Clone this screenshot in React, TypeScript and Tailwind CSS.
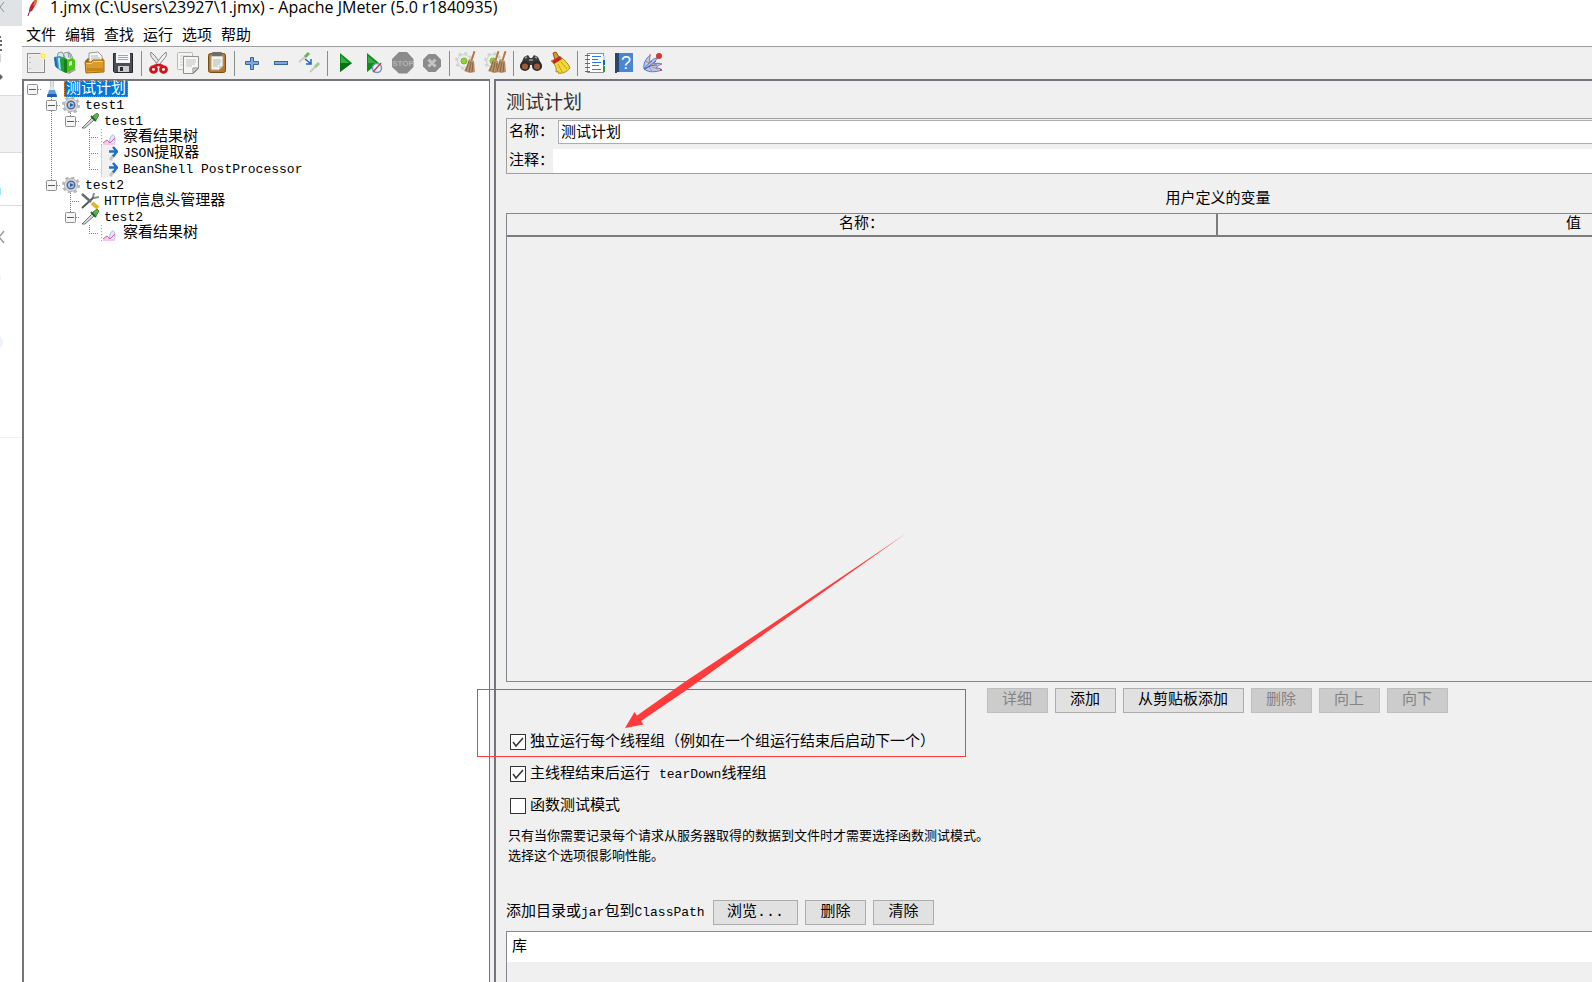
import React from "react";

const cjk = "font-['Liberation_Mono','Noto_Sans_CJK_SC',monospace]";

const NewIcon = () => (
  <svg width="24" height="24" viewBox="0 0 24 24">
    <rect x="2.500" y="2.500" width="17" height="19" fill="#f2f2f2" stroke="#8a8a88" />
    <rect x="4" y="4" width="14" height="16" fill="#e9e9e9" />
    <path d="M5 6v1M5 11v1M5 17v1" stroke="#a88" />
    <circle cx="18" cy="5" r="3.500" fill="#fbf3a0" />
    <circle cx="18" cy="5" r="2" fill="#f3dd3c" />
    <circle cx="18" cy="5" r="1" fill="#fff" />
  </svg>
);

const TemplatesIcon = () => (
  <svg width="24" height="24" viewBox="0 0 24 24">
    <path d="M3 8l1-6 4-1 3 5M9 7l1-5 5-1 2 6M15 7l-1-5 3 1 2 5" fill="#dfe6e8" stroke="#8b9aa0" />
    <path d="M0 6l6-1 4 2v12l-3 1-5-4z" fill="#2f9fc8" />
    <path d="M0 6l2 1 2 11-3-3z" fill="#1b6ca8" />
    <path d="M4 7l2 0 1 12-2-2z" fill="#bfe6f2" />
    <path d="M6 8l4-2 3 2v14l-4-1-2-2z" fill="#2aa02a" />
    <path d="M12 9l6-2 3 2v9l-8 4z" fill="#4cc417" />
    <path d="M10 9l3-1v14l-3-1z" fill="#17801c" />
    <path d="M15 11l3-1v4l-3 1z" fill="#d8f5c0" />
    <path d="M13 22l8-4 1 1-7 4z" fill="#9c9c98" />
  </svg>
);

const OpenIcon = () => (
  <svg width="24" height="24" viewBox="0 0 24 24">
    <path d="M2 10l3-3h15l1 6v8H3z" fill="#9c6610" />
    <path d="M6 2l9-1 4 4v9H6z" fill="#f7f7f5" stroke="#9a9a96" />
    <path d="M8 5h7M8 7h9M8 9h9" stroke="#b9b9b5" />
    <path d="M2 11h6l2-2h11v12l-18 1z" fill="#d99b2b" stroke="#a86d0c" />
    <path d="M3.500 12.500h5l2-2h9" stroke="#f5cf7c" fill="none" />
    <path d="M4 17h16v3H4z" fill="#c48619" />
  </svg>
);

const SaveIcon = () => (
  <svg width="24" height="24" viewBox="0 0 24 24">
    <path d="M1.500 2.500h19v19h-18l-1-1z" fill="#4b4e52" stroke="#26282b" />
    <rect x="4" y="2" width="14" height="10" fill="#f4f7fb" />
    <path d="M6 4.500h10M6 6.500h10M6 8.500h10" stroke="#88a9d6" />
    <rect x="6" y="15" width="11" height="6" fill="#c9ccd0" />
    <rect x="8" y="16" width="3" height="4" fill="#2a2c30" />
  </svg>
);

const CutIcon = () => (
  <svg width="24" height="24" viewBox="0 0 24 24">
    <path d="M4 1c-1 3 0 5 2 7l6 7 2-2-6-8z" fill="#e6e6e6" stroke="#858585" />
    <path d="M19 1c1 3 0 5-2 7l-6 7-2-2 6-8z" fill="#f3f3f3" stroke="#858585" />
    <ellipse cx="6.500" cy="18.500" rx="3" ry="2.800" fill="none" stroke="#d3121a" strokeWidth="2.800" />
    <ellipse cx="16.500" cy="18.500" rx="3" ry="2.800" fill="none" stroke="#d3121a" strokeWidth="2.800" />
    <path d="M7 15l4-1h1l4 1" fill="none" stroke="#d3121a" strokeWidth="2.600" />
  </svg>
);

const CopyIcon = () => (
  <svg width="24" height="24" viewBox="0 0 24 24">
    <rect x="1.500" y="1.500" width="15" height="17" rx="1" fill="#f5f5f3" stroke="#b8b8b4" />
    <path d="M4 5h10M4 8h3M4 11h3M4 14h3" stroke="#ccccc8" />
    <path d="M7.500 5.500h15v12l-5 5h-10z" fill="#f6f6f4" stroke="#90908c" />
    <path d="M10 9h10M10 11h10M10 13h9M10 15h6" stroke="#c2c2be" />
    <path d="M22 17l-5 5v-5z" fill="#d9d9d5" stroke="#90908c" />
  </svg>
);

const PasteIcon = () => (
  <svg width="24" height="24" viewBox="0 0 24 24">
    <rect x="3.500" y="2.500" width="17" height="19" rx="2" fill="#b8772b" stroke="#7a4c10" />
    <path d="M6 5h12v10l-4 4H6z" fill="#f3f3f1" stroke="#a6a6a0" />
    <path d="M8 9h8M8 11h8M8 13h7M8 15h5" stroke="#b5b5b0" />
    <path d="M18 15l-4 4v-4z" fill="#cfcfca" />
    <rect x="7" y="1" width="10" height="4" rx="1" fill="#6c6f69" />
  </svg>
);

const PlusIcon = () => (
  <svg width="24" height="24" viewBox="0 0 24 24">
    <path d="M10.500 6.500h3v4h5v3h-5v5h-3v-5h-5v-3h5z" fill="#7ea7dd" stroke="#3465a4" />
  </svg>
);

const MinusIcon = () => (
  <svg width="24" height="24" viewBox="0 0 24 24">
    <rect x="5.500" y="10.500" width="13" height="3" fill="#7ea7dd" stroke="#3465a4" />
  </svg>
);

const ToggleIcon = () => (
  <svg width="24" height="24" viewBox="0 0 24 24">
    <path d="M1 11l7-6" stroke="#c5cdc8" strokeWidth="2" />
    <path d="M7 6l4-4" stroke="#6fae5f" strokeWidth="3" />
    <path d="M12 21l7-7" stroke="#c5cdc8" strokeWidth="2" />
    <path d="M17 16l4-4" stroke="#9ccb92" strokeWidth="3" />
    <path d="M7 8l5 4M13 8v5H8" stroke="#1765c4" strokeWidth="1.500" fill="none" />
  </svg>
);

const PlayIcon = () => (
  <svg width="24" height="24" viewBox="0 0 24 24">
    <path d="M7 2l12 10L7 21z" fill="#0a8f1c" />
    <path d="M7 12h12L7 21z" fill="#067312" />
    <path d="M8 5l8 7H8z" fill="#38ab45" />
  </svg>
);

const PlayNoTimersIcon = () => (
  <svg width="24" height="24" viewBox="0 0 24 24">
    <path d="M5 2l12 10L5 21z" fill="#0a8f1c" />
    <path d="M6 5l8 7H6z" fill="#38ab45" />
    <circle cx="15" cy="17" r="4.500" fill="#eef3fa" stroke="#6f94c8" strokeWidth="1.500" />
    <path d="M11 21l8-9" stroke="#cf3d3d" strokeWidth="1.500" />
  </svg>
);

const StopIcon = () => (
  <svg width="24" height="24" viewBox="0 0 24 24">
    <path d="M8 1h8l6.500 7v8L16 22.500H8L1 16V8z" fill="#8b8b8b" />
    <text x="12" y="15" textAnchor="middle" fontSize="8" fontWeight="700" fill="#b4b4b4" fontFamily="Liberation Sans, sans-serif">
      STOP
    </text>
  </svg>
);

const ShutdownIcon = () => (
  <svg width="24" height="24" viewBox="0 0 24 24">
    <path d="M8.500 3h7L21 8.500v7L15.500 21h-7L3 15.500v-7z" fill="#8b8b8b" />
    <path d="M8.500 8.500l7 7M15.500 8.500l-7 7" stroke="#c4c4c4" strokeWidth="3" />
  </svg>
);

const PaleGear = () => (
  <g>
    <circle cx="9" cy="10" r="7.500" fill="none" stroke="#d2d5d0" strokeWidth="3" strokeDasharray="3 2.900" />
    <circle cx="9" cy="10" r="6.500" fill="#eceeeb" stroke="#cdd0cb" />
    <circle cx="9" cy="10" r="3" fill="#8fd136" stroke="#7db53a" />
  </g>
);

const Straw = () => (
  <g>
    <path d="M18.500 0l2 .500-3 9h-2z" fill="#b07a48" />
    <path d="M14 8l5 2 1 11-5 1-6-2 3-6z" fill="#b8906a" />
    <path d="M14 10l-3 10M16 11l-2 10M18 12l-1 9" stroke="#8a6645" />
  </g>
);

const ClearIcon = () => (
  <svg width="24" height="24" viewBox="0 0 24 24">
    <PaleGear />
    <Straw />
  </svg>
);

const ClearAllIcon = () => (
  <svg width="24" height="24" viewBox="0 0 24 24">
    <PaleGear />
    <g transform="translate(-5 0)">
      <Straw />
    </g>
    <g transform="translate(2 0)">
      <Straw />
    </g>
  </svg>
);

const SearchIcon = () => (
  <svg width="24" height="24" viewBox="0 0 24 24">
    <path d="M5 6l4-2 2 3h2l2-3 4 2 4 9-1 3h-7l-2-4h-2l-2 4H2l-1-3z" fill="#3a3a3c" />
    <circle cx="6" cy="15" r="5" fill="#2b2b2d" />
    <circle cx="18" cy="15" r="5" fill="#2b2b2d" />
    <circle cx="6" cy="15.500" r="3" fill="#9d5b3c" />
    <circle cx="18" cy="15.500" r="3" fill="#9d5b3c" />
    <path d="M6 7l2-1M16 6l2 1M10 9h4" stroke="#9a9a9e" strokeWidth="1.500" />
  </svg>
);

const BroomIcon = () => (
  <svg width="24" height="24" viewBox="0 0 24 24">
    <path d="M5 2l3-1 3 5-4 3z" fill="#d09a45" stroke="#8c5512" />
    <path d="M3 10l9-4c5 3 8 6 10 11-3 4-8 6-12 5 1-2 0-2-2-1 1-4-1-8-5-11z" fill="#f4d83a" stroke="#a98a10" />
    <path d="M4 10l8-5 2 3-8 5z" fill="#c9202a" />
    <path d="M10 13l4 8M13 11l6 7" stroke="#bfa01c" />
  </svg>
);

const FunctionIcon = () => (
  <svg width="24" height="24" viewBox="0 0 24 24">
    <rect x="4.500" y="2.500" width="16" height="19" fill="#fff" stroke="#8b8e92" />
    <rect x="20" y="5" width="2" height="4" fill="#d5d7da" />
    <rect x="20" y="9" width="2" height="5" fill="#1463c0" />
    <rect x="20" y="15" width="2" height="6" fill="#2f9a2f" />
    <path d="M9 5.500h9M9 8.500h6M9 11.500h9M9 14.500h7M9 18.500h9" stroke="#2a7de0" />
    <path d="M2 4.500h5M2 8.500h5M2 12.500h5M2 16.500h5M2 20.500h5" stroke="#666" />
  </svg>
);

const HelpIcon = () => (
  <svg width="24" height="24" viewBox="0 0 24 24">
    <path d="M3 2h18v20H3z" fill="#4a86cf" />
    <path d="M3 2h4v20H3z" fill="#28466e" />
    <path d="M5 21h16v1H5z" fill="#e8eef6" />
    <text x="14" y="18" textAnchor="middle" fontSize="18" fill="#fff" fontFamily="Liberation Sans, sans-serif">
      ?
    </text>
  </svg>
);

const FlameIcon = () => (
  <svg width="24" height="24" viewBox="0 0 24 24">
    <path d="M3 18C2 12 5 8 9 4c0 3-1 5 0 7 3-3 5-4 8-4-2 2-4 4-4 6 3-1 5-1 8 0-3 1-5 2-6 4 2 0 4 0 6 2-6 2-13 3-18-1z" fill="#b8c8f0" stroke="#5a78c8" />
    <path d="M3 18C6 14 8 12 11 10M4 18c4-3 8-4 12-4M4 18l11-8" stroke="#4a66bd" fill="none" />
    <path d="M4 10l5 2M11 16l6 2M8 16l3 4" stroke="#d97a5a" />
    <circle cx="18" cy="5" r="3" fill="#d9362c" />
    <circle cx="9" cy="4" r="1" fill="#e8854a" />
    <circle cx="20" cy="13" r="1" fill="#e8854a" />
    <circle cx="11" cy="13" r="1" fill="#e8854a" />
    <circle cx="20" cy="19" r="1" fill="#d9362c" />
  </svg>
);

const FlaskIcon = () => (
  <svg width="19" height="16" viewBox="0 0 19 16">
    <path d="M8 0h4v6l3 10H5L8 6z" fill="#dfe7f0" />
    <path d="M7 9h6l2 7H5z" fill="#5e9bdc" />
    <path d="M5.500 13h9l.500 3H5z" fill="#1a5fb0" />
    <path d="M8.500 0v6M11.500 0v6" stroke="#c2c9d0" />
  </svg>
);

const GearIcon = () => (
  <svg width="19" height="16" viewBox="0 0 19 16">
    <circle cx="10" cy="8" r="7.500" fill="none" stroke="#b3b6ba" strokeWidth="3" strokeDasharray="3 2.900" />
    <circle cx="10" cy="8" r="6.500" fill="#dcdee1" stroke="#b0b3b7" />
    <circle cx="10" cy="8" r="3.800" fill="#b4cbee" stroke="#56698a" strokeWidth="1.500" />
    <path d="M9 6l4 2-4 2z" fill="#2c5aa5" />
  </svg>
);

const DropperIcon = () => (
  <svg width="19" height="16" viewBox="0 0 19 16">
    <path d="M2 15L12 5l2 2L5 15z" fill="#d5dad6" stroke="#73797a" />
    <path d="M11 3l5 5" stroke="#2c5a2a" strokeWidth="2" />
    <path d="M13 3l4-3 2 2-3 5z" fill="#5fae52" stroke="#468c3e" />
  </svg>
);

const ChartIcon = () => (
  <svg width="19" height="16" viewBox="0 0 19 16">
    <path d="M4 15l3-4 3 3 6-6v8H4z" fill="#f6c8ea" />
    <path d="M10 14c1-5 2-8 4-8s2 4 2 8" stroke="#a3bdea" fill="#dfe8f8" />
    <path d="M4 14l4-3 3 3 5-5" stroke="#d655a8" fill="none" />
    <path d="M2.500 0v16" stroke="#a5a5a5" strokeDasharray="1 2" />
  </svg>
);

const ExtractIcon = () => (
  <svg width="19" height="16" viewBox="0 0 19 16">
    <path d="M2 0h12v16H2z" fill="#f1f1f1" />
    <path d="M2.500 0v16" stroke="#d4d4d4" />
    <path d="M11 15l4-5" stroke="#c4c8cc" strokeWidth="3" />
    <path d="M10 6.500h8M14 2l4 4.500-4 5" fill="none" stroke="#1f6fc8" strokeWidth="2.500" />
  </svg>
);

const ToolsIcon = () => (
  <svg width="19" height="16" viewBox="0 0 19 16">
    <path d="M2 15L14 4" stroke="#55585a" strokeWidth="2" />
    <path d="M13 4l1-4M14 5l5-1" stroke="#8b8f91" strokeWidth="2" />
    <path d="M2 1l9 8" stroke="#6a6d6f" strokeWidth="2.500" />
    <path d="M12 10l6 5" stroke="#e4b32c" strokeWidth="4" />
  </svg>
);

const toolbar: any[] = [
  [
    ["新建", NewIcon],
    ["模板", TemplatesIcon],
    ["打开", OpenIcon],
    ["保存", SaveIcon],
  ],
  [
    ["剪切", CutIcon],
    ["复制", CopyIcon],
    ["粘贴", PasteIcon],
  ],
  [
    ["展开", PlusIcon],
    ["折叠", MinusIcon],
    ["切换", ToggleIcon],
  ],
  [
    ["启动", PlayIcon],
    ["不停顿开始", PlayNoTimersIcon],
    ["停止", StopIcon],
    ["关闭", ShutdownIcon],
  ],
  [
    ["清除", ClearIcon],
    ["清除全部", ClearAllIcon],
  ],
  [
    ["查找", SearchIcon],
    ["重置查找", BroomIcon],
  ],
  [
    ["函数助手", FunctionIcon],
    ["帮助", HelpIcon],
    ["火焰", FlameIcon],
  ],
];

// guides: one entry per 19px column, named after the sides the dotted line touches
const tree = [
  { guides: ["box"], icon: FlaskIcon, cjk: "测试计划", selected: true },
  { guides: ["", "box up down"], icon: GearIcon, latin: "test1" },
  { guides: ["", "line", "box up"], icon: DropperIcon, latin: "test1" },
  { guides: ["", "line", "", "tee"], icon: ChartIcon, cjk: "察看结果树" },
  { guides: ["", "line", "", "tee"], icon: ExtractIcon, latin: "JSON", cjk: "提取器" },
  { guides: ["", "line", "", "end"], icon: ExtractIcon, latin: "BeanShell PostProcessor" },
  { guides: ["", "box up"], icon: GearIcon, latin: "test2" },
  { guides: ["", "", "tee"], icon: ToolsIcon, latin: "HTTP", cjk: "信息头管理器" },
  { guides: ["", "", "box up"], icon: DropperIcon, latin: "test2" },
  { guides: ["", "", "", "end"], icon: ChartIcon, cjk: "察看结果树" },
];

const Guide = ({ kind }: any) => {
  const box = kind.includes("box");
  const up = kind.includes("up") || kind === "tee" || kind === "end" || kind === "line";
  const down = kind.includes("down") || kind === "tee" || kind === "line";
  return (
    <svg className="shrink-0" width="19" height="16" viewBox="0 0 19 16">
      <g stroke="#808080" strokeDasharray="1 1">
        {up && <path d="M9.500 0v8" />}
        {down && <path d="M9.500 8v8" />}
        {kind !== "" && kind !== "line" && <path d="M9 8.500h10" />}
      </g>
      {box && (
        <g>
          <rect x="4.500" y="3.500" width="10" height="10" rx="1" fill="#f6f6f6" stroke="#8f8f8f" />
          <path d="M6 8.500h7" stroke="#3b5ba8" />
        </g>
      )}
    </svg>
  );
};

const Button = ({ children, wide = "w-[61px]", disabled }: any) => (
  <button
    disabled={disabled}
    className={`h-[25px] ${wide} border text-[15px] leading-[23px] whitespace-nowrap ${
      disabled ? "bg-[#cccccc] border-[#bfbfbf] text-[#838383]" : "bg-[#e1e1e1] border-[#adadad] text-black"
    }`}
  >
    {children}
  </button>
);

const CheckRow = ({ checked, children }: any) => (
  <label className="flex items-center gap-1 h-8 pl-1 text-[15px]">
    <input
      type="checkbox"
      defaultChecked={checked}
      className="peer appearance-none size-4 border border-[#333333] bg-white"
    />
    <svg className="hidden peer-checked:block -ml-5 size-4" viewBox="0 0 16 16">
      <path d="M3 8l3 4 7-8" fill="none" stroke="#333" strokeWidth="1.500" />
    </svg>
    <span className="pt-0.5 whitespace-nowrap">{children}</span>
  </label>
);

const Latin = ({ children }: any) => <span className="text-[13px]">{children}</span>;

const Backdrop = () => (
  <aside className="w-[22px] shrink-0 bg-white overflow-hidden">
    <div className="h-[26px] bg-[#dfe3e6]">
      <svg width="22" height="26" viewBox="0 0 22 26">
        <path d="M4 2L0 7l4 5" fill="none" stroke="#8d9195" />
      </svg>
    </div>
    <div className="h-[70px] border-b border-[#dcdcdc]">
      <svg width="22" height="69" viewBox="0 0 22 69">
        <path d="M0 11h1M0 15h2M0 19h2M0 24h2" stroke="#666a70" strokeWidth="2" />
        <path d="M0 28h1v8H0z" fill="#cfd2d6" />
        <path d="M0 48l3 3-3 3z" fill="#5f6368" />
      </svg>
    </div>
    <div className="h-[57px] bg-[#f2f2f2] border-b border-[#dcdcdc]" />
    <div className="h-[53px] border-b border-[#dcdcdc]">
      <svg width="22" height="52" viewBox="0 0 22 52">
        <rect y="35" width="1" height="7" fill="#9be9fb" />
      </svg>
    </div>
    <div className="h-[232px] border-b border-[#f0f0f0]">
      <svg width="22" height="231" viewBox="0 0 22 231">
        <path d="M4 25l-5 6 5 6" fill="none" stroke="#999" strokeWidth="1.500" />
        <circle cx="-4" cy="72" r="5" fill="#eef1fa" />
        <circle cx="-5" cy="136" r="8" fill="#eef2fa" />
      </svg>
    </div>
  </aside>
);

const App = () => {
  return (
    <div className={`relative flex h-screen overflow-hidden bg-white text-black ${cjk}`}>
      <Backdrop />
      <div className="flex flex-col flex-1 min-w-0">
        <header className="h-[46px] shrink-0">
          <div className="flex items-center h-4 gap-3 pl-1">
            <svg width="12" height="16" viewBox="0 0 12 16">
              <path d="M9 0C5 3 3 8 3 12l3-1c2-3 4-7 5-11z" fill="#c8202e" />
              <path d="M10 0C8 1 8 3 7 6l3-1 1-5z" fill="#e8742a" />
              <path d="M4 10L2 16" stroke="#6b2a6e" />
            </svg>
            <h1 className="text-[16px] leading-[14px] h-4 whitespace-nowrap font-['Open_Sans',sans-serif]">
              1.jmx (C:\Users\23927\1.jmx) - Apache JMeter (5.0 r1840935)
            </h1>
          </div>
          <nav className="flex gap-[9px] pl-1 pt-2.5 text-[15px] leading-[22px]">
            {["文件", "编辑", "查找", "运行", "选项", "帮助"].map((m) => (
              <button key={m}>{m}</button>
            ))}
          </nav>
        </header>

        <div className="flex items-center h-[33px] shrink-0 bg-[#f0f0f0] border-t border-[#a0a0a0]">
          {toolbar.map((group, i) => (
            <React.Fragment key={i}>
              {i > 0 && (
                <div className="flex justify-center w-1.5">
                  <div className="w-px h-[25px] bg-[#8c8c8c]" />
                </div>
              )}
              {group.map(([label, Icon]: any) => (
                <button key={label} aria-label={label} className="flex justify-center w-[29px]">
                  <Icon />
                </button>
              ))}
            </React.Fragment>
          ))}
        </div>

        <div className="flex flex-1 min-h-0 bg-[#f0f0f0]">
          <ul className="w-[468px] shrink-0 bg-white border-t-2 border-l-2 border-r border-[#74747c]">
            {tree.map((node: any, i) => (
              <li key={i} className="flex h-4 text-[15px] leading-[18px] -ml-px">
                {node.guides.map((g: string, k: number) => (
                  <Guide key={k} kind={g} />
                ))}
                <node.icon />
                <span
                  className={`h-4 whitespace-nowrap ml-[3px] px-0.5 ${
                    node.selected ? "bg-[#0078d7] text-white outline outline-dotted outline-[#e08020] -outline-offset-1" : ""
                  }`}
                >
                  {node.latin && <Latin>{node.latin}</Latin>}
                  {node.cjk}
                </span>
              </li>
            ))}
          </ul>

          <main className="flex-1 min-w-0 ml-1 overflow-hidden border-t-2 border-l-2 border-[#74747c] pl-2.5">
            {/* form is wider than the window and runs off its right edge */}
            <form className="w-[1424px]">
              <h2 className="pt-2 h-[37px] text-[19px] leading-[30px] text-[#333333]">测试计划</h2>
              <div className="flex flex-col gap-[5px] h-14 pt-px border border-[#a0a0a0] text-[15px]">
                <div className="flex items-center h-6 pl-0.5">
                  <label htmlFor="name" className="w-[49px] pt-0.5 shrink-0">名称：</label>
                  <input
                    id="name"
                    defaultValue="测试计划"
                    className="flex-1 h-6 pl-0.5 pb-0.5 bg-white border border-[#abadb3] outline-none"
                  />
                </div>
                <div className="flex items-center h-6 pl-0.5">
                  <label htmlFor="comment" className="w-11 pt-0.5 shrink-0 whitespace-nowrap">注释：</label>
                  <input id="comment" className="flex-1 h-6 bg-white outline-none" />
                </div>
              </div>

              <table className="w-full mt-[13px] table-fixed border-separate border-spacing-0 border border-[#828790] text-[15px]">
                <caption className="h-[26px] leading-[26px]">用户定义的变量</caption>
                <thead>
                  <tr className="h-[23px]">
                    <th className="p-0 font-normal leading-[21px] border-r-2 border-b-2 border-[#7c7c7c]">名称：</th>
                    <th className="p-0 font-normal leading-[21px] border-b-2 border-[#7c7c7c]">值</th>
                  </tr>
                </thead>
                <tbody>
                  <tr className="h-[444px]">
                    <td colSpan={2} />
                  </tr>
                </tbody>
              </table>

              <div className="flex justify-center gap-[7px] mt-1.5 pr-0.5">
                <Button disabled>详细</Button>
                <Button>添加</Button>
                <Button wide="w-[121px]">从剪贴板添加</Button>
                <Button disabled>删除</Button>
                <Button disabled>向上</Button>
                <Button disabled>向下</Button>
              </div>

              <div className="mt-[13px]">
                <CheckRow checked>独立运行每个线程组（例如在一个组运行结束后启动下一个）</CheckRow>
                <CheckRow checked>
                  主线程结束后运行 <Latin>tearDown</Latin>线程组
                </CheckRow>
                <CheckRow>函数测试模式</CheckRow>
              </div>
              <p className="pl-0.5 pt-[5px] text-[13px] leading-5">
                只有当你需要记录每个请求从服务器取得的数据到文件时才需要选择函数测试模式。
                <br />
                选择这个选项很影响性能。
              </p>

              <div className="flex items-center gap-[7px] mt-[33px] text-[15px]">
                <span className="w-[200px] pt-0.5 whitespace-nowrap">
                  添加目录或<Latin>jar</Latin>包到<Latin>ClassPath</Latin>
                </span>
                <Button wide="w-[85px]">浏览...</Button>
                <Button>删除</Button>
                <Button>清除</Button>
              </div>

              <div className="h-20 mt-1.5 border border-[#828790]">
                <div className="h-[30px] pl-[5px] bg-white text-[15px] leading-8">库</div>
              </div>
            </form>
          </main>
        </div>
      </div>

      {/* red annotation drawn over the window */}
      <div className="absolute left-[477px] top-[689px] w-[489px] h-[68px] border border-[#ff3b3b] pointer-events-none" />
      <svg className="absolute left-[620px] top-[530px] pointer-events-none" width="290" height="200" viewBox="620 530 290 200">
        <path d="M625 728l9.500-16 2.500 3.500L686 681 760 632 906 533.500 760 637 688 689 641 721l2.500 3.500z" fill="#ff3b3b" />
      </svg>
    </div>
  );
};

export default App;
